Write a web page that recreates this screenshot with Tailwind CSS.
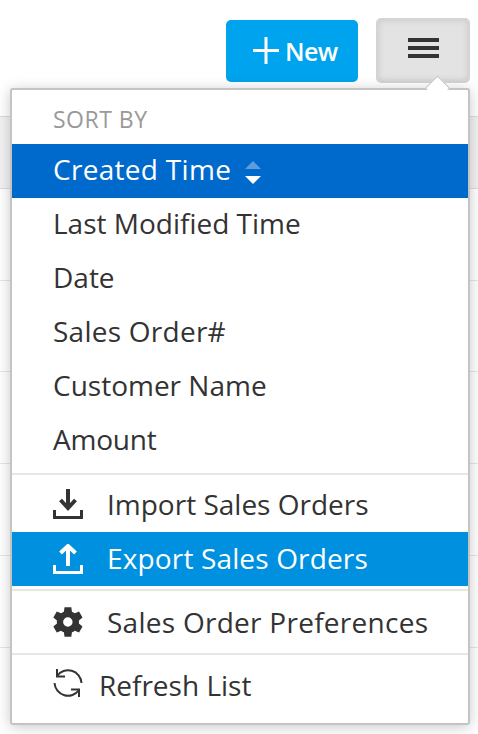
<!DOCTYPE html>
<html lang="en">
<head>
<meta charset="UTF-8">
<title>Sales Orders</title>
<script src="https://cdn.jsdelivr.net/npm/@tailwindcss/browser@4"></script>
</head>
<body class="bg-white font-['Open_Sans',sans-serif] text-[#333]">
<div class="relative h-[734px] w-[478px] overflow-hidden">
  <!-- rows behind the menu -->
  <div class="pt-[116px]">
    <div class="h-[73px] border-y border-[#dcdcdc] bg-[#f2f2f2]"></div>
    <div class="h-[92px] border-b border-[#e6e6e6]"></div>
    <div class="h-[91px] border-b border-[#e6e6e6]"></div>
    <div class="h-[92px] border-b border-[#e6e6e6]"></div>
    <div class="h-[92px] border-b border-[#e6e6e6]"></div>
    <div class="h-[92px] border-b border-[#e6e6e6]"></div>
  </div>

  <!-- toolbar -->
  <div class="absolute top-[18px] left-[226px] flex items-start gap-[18px]">
    <button class="mt-[2px] flex h-[62px] w-[132px] items-center rounded-[5px] bg-[#00a3ed] pl-[27px] text-white">
      <svg class="mb-[1px]" width="26" height="27" viewBox="0 0 26 27"><path d="M13 0v27M0 13.500h26" stroke="#fff" stroke-width="3" fill="none"/></svg>
      <span class="ml-[6px] text-[25px] leading-none font-semibold tracking-[-0.6px]">New</span>
    </button>
    <button class="flex h-[65px] w-[94px] items-center justify-center rounded-[5px] border-2 border-[#d4d4d4] bg-[#e3e3e3] shadow-[inset_0_0_7px_#c8c8c8]">
      <svg class="mb-[5px]" width="31" height="20" viewBox="0 0 31 20"><path d="M0 2h31M0 10h31M0 18h31" stroke="#333" stroke-width="4" fill="none"/></svg>
    </button>
  </div>

  <!-- dropdown -->
  <div class="absolute top-[88px] left-[10px] h-[637px] w-[460px] rounded-[3px] border-2 border-[#c4c4c4] bg-white shadow-[0_2px_14px_rgba(0,0,0,0.22)]">
    <div class="absolute -top-[11px] right-[22px] size-[17px] rotate-45 border-t border-l border-[#c4c4c4] bg-white"></div>
    <div class="relative">
      <div class="flex h-[54px] items-center px-[41px] pt-[5px] text-[23px] tracking-[0.5px] text-[#999]">SORT BY</div>
      <div class="flex h-[54px] items-center bg-[#0069cc] px-[41px] pb-[4px] text-[28px] tracking-[0.3px] text-white">
        <span>Created Time</span>
        <svg class="mt-[7px] ml-[14px]" width="16" height="23" viewBox="0 0 16 23"><path d="M8 0l8 8H0z" fill="#5c9cdf"/><path d="M8 23l8-8H0z" fill="#fff"/></svg>
      </div>
      <div class="flex h-[54px] items-center px-[41px] pb-[4px] text-[28px]">Last Modified Time</div>
      <div class="flex h-[54px] items-center px-[41px] pb-[4px] text-[28px]">Date</div>
      <div class="flex h-[54px] items-center px-[41px] pb-[4px] text-[28px] tracking-[0.25px]">Sales Order#</div>
      <div class="flex h-[54px] items-center px-[41px] pb-[4px] text-[28px]">Customer Name</div>
      <div class="flex h-[54px] items-center px-[41px] pb-[4px] text-[28px] tracking-[-0.2px]">Amount</div>
      <div class="mt-[5px] border-t-2 border-[#e6e6e6]"></div>
      <div class="flex h-[57px] items-center pl-[41px] text-[28px]">
        <svg class="mr-[24px]" width="30" height="30" viewBox="0 0 30 30"><path d="M1.500 21v7.500h27V21" stroke="#333" stroke-width="3" fill="none"/><path d="M15 0v18" stroke="#333" stroke-width="4" fill="none"/><path d="M7.500 11l7.500 8 7.500-8" stroke="#333" stroke-width="4" fill="none"/></svg>
        <span>Import Sales Orders</span>
      </div>
      <div class="flex h-[54px] items-center bg-[#0090e0] pl-[41px] text-[28px] tracking-[0.15px] text-white">
        <svg class="mr-[24px]" width="30" height="30" viewBox="0 0 30 30"><path d="M1.500 21v7.500h27V21" stroke="#fff" stroke-width="3" fill="none"/><path d="M15 22V3" stroke="#fff" stroke-width="4" fill="none"/><path d="M7.500 9l7.500-7 7.500 7" stroke="#fff" stroke-width="4" fill="none"/></svg>
        <span class="mb-[2px]">Export Sales Orders</span>
      </div>
      <div class="mt-[3px] border-t-2 border-[#e6e6e6]"></div>
      <div class="flex h-[62px] items-center pl-[41px] text-[28px] tracking-[0.27px]">
        <svg class="mr-[24px]" width="30" height="30" viewBox="3 2.500 19 19"><path fill="#333" fill-rule="evenodd" d="M19.400 13a7.500 7.500 0 0 0 0-2l2.300-1.800-2.200-3.800-2.700 1.100a7.600 7.600 0 0 0-1.800-1L14.600 2.600h-4.300l-.4 2.900a7.600 7.600 0 0 0-1.800 1L5.400 5.400 3.200 9.200 5.500 11a7.500 7.500 0 0 0 0 2l-2.300 1.800 2.200 3.800 2.700-1.100a7.600 7.600 0 0 0 1.800 1l.4 2.900h4.300l.4-2.900a7.600 7.600 0 0 0 1.800-1l2.700 1.100 2.200-3.800zM12.400 15a3 3 0 1 1 0-6 3 3 0 0 1 0 6z"/></svg>
        <span>Sales Order Preferences</span>
      </div>
      <div class="border-t-2 border-[#e6e6e6]"></div>
      <div class="flex h-[59px] items-center pl-[41px] text-[28px]">
        <svg class="mr-[16px] mb-[3px]" width="30" height="30" viewBox="0 0 30 30"><path d="M4 8A13.500 13.500 0 0 1 28.500 15M26 22A13.500 13.500 0 0 1 1.500 15" stroke="#333" stroke-width="2" fill="none"/><path d="M4 1v7.500h8M26 29v-7.500h-8" stroke="#333" stroke-width="2" fill="none"/></svg>
        <span class="mt-[1px]">Refresh List</span>
      </div>
    </div>
  </div>
</div>
</body>
</html>
